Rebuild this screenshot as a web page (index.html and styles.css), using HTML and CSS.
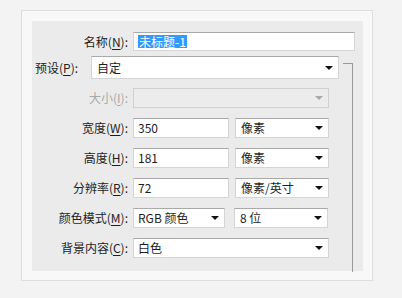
FILE: index.html
```html
<!DOCTYPE html>
<html lang="zh-CN">
<head>
    <meta charset="utf-8">
    <title>新建</title>
<link rel="stylesheet" href="styles.css">
</head>
<body>
<div class="card">
<div class="panel">
    <div class="row r-name">
        <label class="lbl">名称(<u>N</u>):</label>
        <div class="box txt w-name"><span class="sel">未标题-1</span></div>
    </div>
    <div class="row r-preset">
        <label class="lbl lbl-preset">预设(<u>P</u>):</label>
        <div class="box drop w-preset">自定<i class="arr"></i></div>
    </div>
    <div class="row">
        <label class="lbl off">大小(<u>I</u>):</label>
        <div class="box drop dis w-size"><i class="arr"></i></div>
    </div>
    <div class="row">
        <label class="lbl">宽度(<u>W</u>):</label>
        <div class="box txt w-num">350</div>
        <div class="box drop w-unit">像素<i class="arr"></i></div>
    </div>
    <div class="row">
        <label class="lbl">高度(<u>H</u>):</label>
        <div class="box txt w-num">181</div>
        <div class="box drop w-unit">像素<i class="arr"></i></div>
    </div>
    <div class="row">
        <label class="lbl">分辨率(<u>R</u>):</label>
        <div class="box txt w-num">72</div>
        <div class="box drop w-unit">像素/英寸<i class="arr"></i></div>
    </div>
    <div class="row">
        <label class="lbl">颜色模式(<u>M</u>):</label>
        <div class="box drop w-mode">RGB 颜色<i class="arr"></i></div>
        <div class="box drop w-unit">8 位<i class="arr"></i></div>
    </div>
    <div class="row">
        <label class="lbl">背景内容(<u>C</u>):</label>
        <div class="box drop w-size">白色<i class="arr"></i></div>
    </div>
    <div class="bracket"></div>
</div>
</div>
</body>
</html>
```

FILE: styles.css
```css
body {margin: 0; background: #f3f3f3; font-family: "Noto Sans CJK SC", "Noto Sans", sans-serif; font-size: 12px; color: #1e1e1e;}
.card {margin: 10px 0 0 21px; width: 331px; padding: 10px 9px 9px 10px; background: #f8f8f8; border: 1px solid #dedede;}
.panel {position: relative; height: 239px; padding-top: 11px; background: #ebebeb; display: flex; flex-direction: column; gap: 10px;}
.row {display: flex; align-items: center; height: 20px;}
.r-name {height: 19px; margin-bottom: -5px;}
.r-preset {height: 23px; margin-bottom: -1px;}
.lbl {width: 96px; margin-right: 5px; text-align: right; white-space: nowrap; line-height: 20px;}
.lbl u {text-underline-offset: 2px;}
.lbl-preset {width: 50px; margin-right: 6px; text-align: left; padding-left: 3px;}
.off {color: #a8a8a8;}
.box {position: relative; box-sizing: border-box; height: 100%; background: #fff; border: 1px solid #d4d4d4; border-top-color: #a9a9a9; padding-left: 4px; line-height: 18px; white-space: nowrap;}
.r-preset .box {line-height: 21px; padding-left: 5px;}
.sel {background: #3399ff; color: #fff; padding: 0 1px; line-height: 13px; display: inline-block;}
.w-name {width: 222px;}
.w-preset {width: 248px;}
.w-size {width: 196px;}
.w-num {width: 96px; margin-right: 6px;}
.w-unit {width: 94px; padding-left: 5px;}
.w-mode {width: 92px; margin-right: 9px;}
.dis {background: #ececec; border-color: #d0d0d0;}
.arr {position: absolute; right: 5px; top: 50%; margin-top: -2px; width: 0; height: 0; border-left: 4px solid transparent; border-right: 4px solid transparent; border-top: 4px solid #111;}
.dis .arr {border-top-color: #a8a8a8;}
.bracket {position: absolute; left: 311px; top: 42px; width: 9px; height: 208px; border-top: 1px solid #999; border-right: 1px solid #999;}
```
